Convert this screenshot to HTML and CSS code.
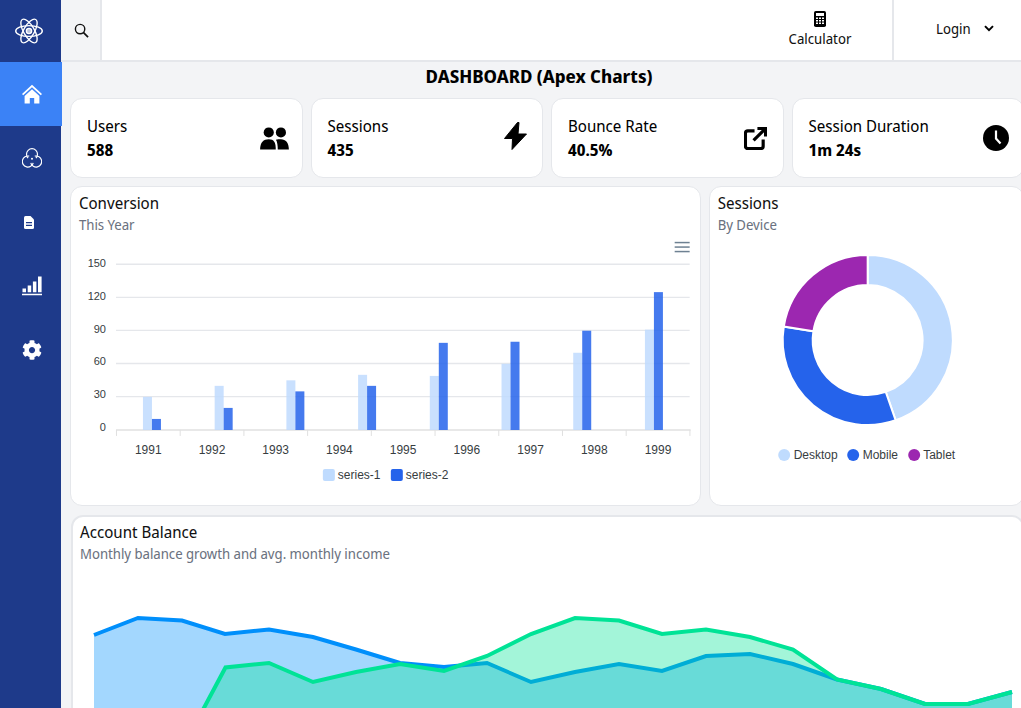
FILE: index.html
```html
<!DOCTYPE html>
<html lang="en">
<head>
<meta charset="utf-8">
<title>Dashboard</title>
<link rel="stylesheet" href="styles.css">
</head>
<body>
<div class="app">
  <aside class="sidebar">
    <div class="logo">
      <svg class="logo-icon" viewBox="0 0 28 28" fill="none" stroke="#fff" stroke-width="1.4">
        <ellipse cx="14" cy="14" rx="13.3" ry="5.4"/>
        <ellipse cx="14" cy="14" rx="13.3" ry="5.4" transform="rotate(60 14 14)"/>
        <ellipse cx="14" cy="14" rx="13.3" ry="5.4" transform="rotate(120 14 14)"/>
        <circle cx="14" cy="14" r="2.6" fill="#fff" fill-opacity=".7"/>
      </svg>
    </div>
    <nav class="nav">
      <a class="nav-item active">
        <svg class="nav-icon" viewBox="0 0 20 20" fill="#fff"><path d="M10 .8 0 10l1.2 1.3L10 3.3l8.8 8 1.2-1.3z"/><path d="M10 5.2 2.6 12v7.6h5.2V14h4.400v5.600h5.200V12z"/></svg>
      </a>
      <a class="nav-item">
        <svg class="nav-icon" viewBox="0 0 20 20" fill="none" stroke="#fff" stroke-width="1.200"><path d="M6.100 10.100A5.500 5.500 0 1 1 13.900 10.100"/><path d="M11.200 14.800A5.500 5.500 0 1 1 7.200 8.200"/><path d="M12.800 8.200A5.500 5.500 0 1 1 8.800 14.800"/><circle cx="10" cy="10.800" r="1" fill="#fff" stroke="none"/></svg>
      </a>
      <a class="nav-item">
        <svg class="nav-icon nav-icon-doc" viewBox="0 0 10 13"><path fill="#fff" d="M1.500 0H6.500L10 3.500V11.500Q10 13 8.500 13H1.500Q0 13 0 11.500V1.500Q0 0 1.500 0Z"/><path fill="#1e3a8a" d="M2 6h6v1.200H2zM2 8.800h6V10H2z"/></svg>
      </a>
      <a class="nav-item">
        <svg class="nav-icon" viewBox="0 0 20 20" fill="#fff"><path d="M.5 12.500h3.500v3.800H.5zM5.700 9.500h3.500v6.800H5.700zM10.900 5.500h3.500v10.800h-3.500zM16 .5h3.600v15.800H16zM0 17.800h20v1.400H0z"/></svg>
      </a>
      <a class="nav-item">
        <svg class="nav-icon" viewBox="0 0 512 512" fill="#fff"><path d="M487.400 315.700l-42.600-24.600c4.300-23.200 4.300-47 0-70.200l42.600-24.600c4.900-2.800 7.100-8.600 5.500-14-11.100-35.600-30-67.800-54.700-94.600-3.800-4.100-10-5.100-14.800-2.300L380.800 110c-17.900-15.400-38.500-27.300-60.800-35.100V25.800c0-5.600-3.900-10.500-9.400-11.700-36.700-8.200-74.300-7.800-109.200 0-5.500 1.200-9.400 6.100-9.400 11.700V75c-22.200 7.900-42.800 19.800-60.800 35.100L88.700 85.500c-4.900-2.800-11-1.900-14.800 2.300-24.700 26.700-43.600 58.900-54.700 94.600-1.700 5.400.6 11.200 5.500 14L67.300 221c-4.300 23.200-4.300 47 0 70.200l-42.600 24.600c-4.900 2.800-7.100 8.600-5.500 14 11.100 35.600 30 67.800 54.700 94.600 3.800 4.100 10 5.100 14.800 2.300l42.600-24.600c17.900 15.400 38.500 27.300 60.800 35.100v49.200c0 5.600 3.900 10.500 9.400 11.700 36.700 8.200 74.300 7.800 109.200 0 5.500-1.200 9.400-6.100 9.400-11.700v-49.200c22.200-7.900 42.800-19.800 60.800-35.100l42.600 24.600c4.900 2.800 11 1.900 14.800-2.300 24.700-26.700 43.600-58.900 54.700-94.600 1.500-5.500-.7-11.300-5.600-14.100zM256 336c-44.100 0-80-35.900-80-80s35.900-80 80-80 80 35.900 80 80-35.900 80-80 80z"/></svg>
      </a>
    </nav>
  </aside>

  <div class="page">
    <header class="topbar">
      <div class="search">
        <svg class="search-icon" viewBox="0 0 16 16" fill="none" stroke="#111" stroke-width="1.500"><circle cx="6.500" cy="6.500" r="5"/><path d="M10.200 10.200 15 15" stroke-width="1.800"/></svg>
      </div>
      <div class="topbar-fill"></div>
      <div class="calc">
        <svg class="calc-icon" viewBox="0 0 12 16"><rect width="12" height="16" rx="1.800" fill="#000"/><rect x="2" y="2" width="8" height="3" fill="#fff"/><path fill="#fff" d="M2 6.500h2V8H2zM5 6.500h2V8H5zM8 6.500h2V8H8zM2 9h2v1.500H2zM5 9h2v1.500H5zM8 9h2v1.500H8zM2 11.500h2V13H2zM5 11.500h2V13H5zM8 11.500h2V13H8z"/></svg>
        <span>Calculator</span>
      </div>
      <div class="login">
        <span>Login</span>
        <svg class="chevron" viewBox="0 0 12 8" fill="none" stroke="#000" stroke-width="2.400"><path d="M1.200 1.200 6 6l4.800-4.800"/></svg>
      </div>
    </header>

    <main class="content">
      <h1 class="title">DASHBOARD (Apex Charts)</h1>

      <section class="stats">
        <div class="card stat">
          <div><div class="stat-label">Users</div><div class="stat-value">588</div></div>
          <svg class="stat-icon icon-users" viewBox="0 0 30 24" fill="#000"><circle cx="9" cy="5.700" r="5.300"/><circle cx="21.700" cy="5.700" r="5.300"/><path d="M0 23.500C0 16 3.500 12.800 9 12.800S16.300 16 16.300 23.500z"/><path d="M16.500 13.200c1.500-.4 3.300-.5 5.200-.5 5 0 8.300 3.500 8.300 10.800H18.400c0-4.500-.5-8-1.900-10.300z"/></svg>
        </div>
        <div class="card stat">
          <div><div class="stat-label">Sessions</div><div class="stat-value">435</div></div>
          <svg class="stat-icon icon-bolt" viewBox="0 0 23 28" fill="#000" stroke="#000" stroke-width="1" stroke-linejoin="round"><path d="M13.500 .5 .5 16.500H8.500L8 27.500 22.500 12H14L15 .5z"/></svg>
        </div>
        <div class="card stat">
          <div><div class="stat-label">Bounce Rate</div><div class="stat-value">40.5%</div></div>
          <svg class="stat-icon icon-ext" viewBox="0 0 24 24" fill="none" stroke="#000" stroke-width="3.300"><path d="M11 4H4Q1.500 4 1.500 6.500V20Q1.500 22.500 4 22.500H17.500Q20 22.500 20 20V13"/><path d="M10 14 21 3"/><path d="M14 1.500h8.500V10"/></svg>
        </div>
        <div class="card stat">
          <div><div class="stat-label">Session Duration</div><div class="stat-value">1m 24s</div></div>
          <svg class="stat-icon icon-clock" viewBox="0 0 26 26"><circle cx="13" cy="13" r="13" fill="#000"/><path d="M13 5.500V13.500L17.500 18.500" fill="none" stroke="#fff" stroke-width="2.200"/></svg>
        </div>
      </section>

      <section class="charts">
        <div class="card chart-card">
          <div class="card-title">Conversion</div>
          <div class="card-sub">This Year</div>
          <svg class="chart-svg" viewBox="71 235 629 270" id="bars"></svg>
        </div>
        <div class="card chart-card">
          <div class="card-title">Sessions</div>
          <div class="card-sub">By Device</div>
          <svg class="chart-svg" viewBox="710 235 313 270">
            <g stroke="#fff" stroke-width="2">
              <path fill="#bfdbfe" d="M867.500 255A85 85 0 0 1 895.500 420.300L885.600 391.900A55 55 0 0 0 867.500 285Z"/>
              <path fill="#2563eb" d="M895.500 420.300A85 85 0 0 1 783.600 326.600L813.200 331.300A55 55 0 0 0 885.600 391.900Z"/>
              <path fill="#9c27b0" d="M783.600 326.600A85 85 0 0 1 867.500 255L867.500 285A55 55 0 0 0 813.200 331.300Z"/>
            </g>
            <g class="svg-label">
              <circle cx="784" cy="455" r="6" fill="#bfdbfe"/><text x="793.500" y="459">Desktop</text>
              <circle cx="853" cy="455" r="6" fill="#2563eb"/><text x="862.500" y="459">Mobile</text>
              <circle cx="914" cy="455" r="6" fill="#9c27b0"/><text x="923" y="459">Tablet</text>
            </g>
          </svg>
        </div>
      </section>

      <section class="card balance">
        <div class="card-title">Account Balance</div>
        <div class="card-sub">Monthly balance growth and avg. monthly income</div>
        <svg class="balance-svg" viewBox="73 565 953 200">
          <path fill="#008ffb" fill-opacity=".36" d="M94 634 138 617 182 619.500 225 633 269 628.500 313 636 356 648.500 400 662 444 666 487 662 531 681 575 671 619 663 662 670 706 655 750 653 793 663 837 678.500 881 688 925 703 968 703 1012 691V765H94Z"/>
          <path fill="none" stroke="#008ffb" stroke-width="4" d="M94 634 138 617 182 619.500 225 633 269 628.500 313 636 356 648.500 400 662 444 666 487 662 531 681 575 671 619 663 662 670 706 655 750 653 793 663 837 678.500 881 688 925 703 968 703 1012 691"/>
          <path fill="#00e396" fill-opacity=".36" d="M182 748 225.500 666.500 269 662 313 681 356 671 400 663 444 670 487 655 531 633 575 617 619 619.500 662 633 706 628.500 750 636 793 648.500 837 678.500 881 688 925 703 968 703 1012 691V765H182Z"/>
          <path fill="none" stroke="#00e396" stroke-width="4" d="M182 748 225.500 666.500 269 662 313 681 356 671 400 663 444 670 487 655 531 633 575 617 619 619.500 662 633 706 628.500 750 636 793 648.500 837 678.500 881 688 925 703 968 703 1012 691"/>
        </svg>
      </section>
    </main>
  </div>
</div>
<script src="chart.js"></script>
</body>
</html>
```

FILE: chart.js
```js
const NS = 'http://www.w3.org/2000/svg';
const svg = document.getElementById('bars');
const add = (name, attrs, text) => {
  const el = document.createElementNS(NS, name);
  for (const k in attrs) el.setAttribute(k, attrs[k]);
  if (text !== undefined) el.textContent = text;
  svg.appendChild(el);
  return el;
};
const y0 = 430, scale = 165.5 / 150;
[0, 30, 60, 90, 120, 150].forEach(v => {
  const y = y0 - v * scale;
  if (v) add('line', { x1: 116, x2: 690, y1: y - 0.3, y2: y - 0.3, stroke: '#e5e7eb', 'stroke-width': 1.3 });
  add('text', { x: 106, y: 431 - v * 1.093, 'text-anchor': 'end', class: 'svg-tick' }, v);
});
add('line', { x1: 116, x2: 691, y1: 430, y2: 430, stroke: '#e0e0e0', 'stroke-width': 1.5 });
const s1 = [30, 40, 45, 50, 49, 60, 70, 91];
const s2 = [10, 20, 35, 40, 79, 80, 90, 125];
s1.forEach((v, i) => {
  const x = 143 + i * 71.75;
  add('rect', { x, y: y0 - v * scale, width: 9, height: v * scale, fill: '#bfdbfe', 'fill-opacity': .85 });
  add('rect', { x: x + 9, y: y0 - s2[i] * scale, width: 9, height: s2[i] * scale, fill: '#2563eb', 'fill-opacity': .85 });
});
for (let i = 0; i < 10; i++) {
  const x = 116.5 + i * 63.75;
  add('line', { x1: x, x2: x, y1: 430, y2: 436, stroke: '#e0e0e0' });
}
for (let i = 0; i < 9; i++) {
  add('text', { x: 148.3 + i * 63.75, y: 454, 'text-anchor': 'middle', class: 'svg-label' }, 1991 + i);
}
add('rect', { x: 323, y: 469, width: 12, height: 12, rx: 2, fill: '#bfdbfe' });
add('text', { x: 338, y: 479, class: 'svg-label' }, 'series-1');
add('rect', { x: 391, y: 469, width: 12, height: 12, rx: 2, fill: '#2563eb' });
add('text', { x: 406, y: 479, class: 'svg-label' }, 'series-2');
[242.5, 247, 251.5].forEach(y => add('line', { x1: 675, x2: 690, y1: y, y2: y, stroke: '#6e8192', 'stroke-width': 1.5 }));
```

FILE: styles.css
```css
* { box-sizing: border-box; }
html, body { margin: 0; height: 100%; overflow: hidden; }
body { font-family: "Noto Sans Display", "Noto Sans", sans-serif; color: #000; background: #f3f4f6; }
.app { display: flex; height: 708px; overflow: hidden; }

.sidebar { flex: 0 0 61px; width: 61px; background: #1e3a8a; }
.logo { height: 62px; display: flex; align-items: center; justify-content: center; }
.logo-icon { width: 28px; height: 28px; margin-left: -3px; }
.nav { display: flex; flex-direction: column; }
.nav-item { width: 62px; height: 64px; display: flex; align-items: center; justify-content: center; position: relative; z-index: 1; }
.nav-item.active { background: #3b82f6; }
.nav-icon { width: 20px; height: 20px; margin-left: 2px; }
.nav-icon-doc { width: 10px; height: 13px; margin-left: -4px; }

.page { flex: 1; min-width: 0; display: flex; flex-direction: column; }
.topbar { height: 62px; flex: none; display: flex; background: #fff; border-bottom: 2px solid #e5e7eb; }
.search { width: 41px; display: flex; align-items: center; justify-content: center; background: #f3f4f6; border-right: 2px solid #e5e7eb; }
.search-icon { width: 15px; height: 15px; margin-left: 2px; }
.topbar-fill { flex: 1; }
.calc { width: 130px; flex: none; display: flex; flex-direction: column; align-items: center; padding: 11px 16px 0 0; font-size: 14px; line-height: 20px; color: #111; border-right: 2px solid #e5e7eb; }
.calc-icon { width: 12px; height: 16px; margin-bottom: 2px; }
.login { width: 127px; flex: none; display: flex; align-items: center; gap: 13px; padding: 0 0 4px 42px; font-size: 14px; color: #111; }
.chevron { width: 10px; height: 7px; }

.content { width: 954px; margin-left: 9px; }
.title { margin: 2px 16px 10px 0; font-size: 18px; line-height: 24px; font-weight: 700; text-align: center; }
.card { background: #fff; border: 1px solid #e5e7eb; border-radius: 12px; }
.stats { display: grid; grid-template-columns: repeat(4, 1fr); gap: 8px; }
.stat { height: 80px; padding: 15px 16px; display: flex; align-items: center; justify-content: space-between; font-size: 16px; line-height: 24px; }
.stat-value { font-weight: 700; }
.stat-icon { flex: none; }
.icon-users { width: 29px; height: 23px; margin-right: -3px; }
.icon-bolt { width: 23px; height: 28px; margin: -4px -1px 0 0; }
.icon-ext { width: 23px; height: 23px; }
.icon-clock { width: 26px; height: 26px; margin-right: -2px; }
.charts { display: grid; grid-template-columns: minmax(0, 2fr) minmax(0, 1fr); gap: 8px; margin: 8px 0 9px; }
.chart-card { height: 320px; padding: 4px 8px 0; }
.card-title { font-size: 16px; line-height: 24px; color: #111; }
.card-sub { font-size: 14px; line-height: 20px; color: #6b7280; letter-spacing: -.04px; }
.chart-svg { display: block; width: calc(100% + 16px); height: 270px; margin: 0 -8px; }
.svg-tick { font: 11px "Liberation Sans", Arial, sans-serif; fill: #373d3f; }
.svg-label { font: 12px "Liberation Sans", Arial, sans-serif; fill: #373d3f; }
.balance { margin-left: 1px; height: 260px; border-width: 2px; padding: 3px 8px 0 7px; overflow: hidden; }
.balance-svg { display: block; width: 953px; height: 200px; margin: 2px 0 0 -7px; }
```
